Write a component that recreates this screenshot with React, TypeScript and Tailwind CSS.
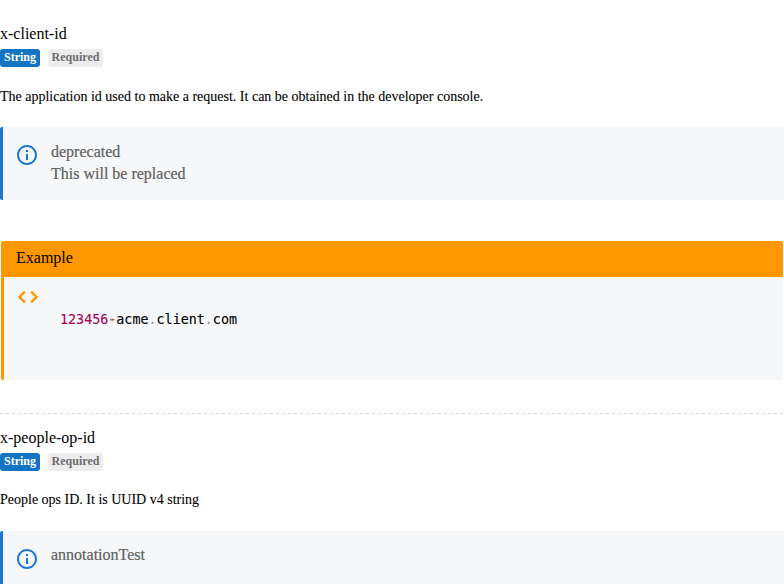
import React from 'react';

function Header({ name }: { name: string }) {
  return (
    <div>
      <div className="h-5 text-[16px] leading-5">{name}</div>
      <div className="mt-[5px] flex h-[18px] gap-2 text-[12px] font-bold leading-[17px]">
        <span className="w-10 rounded-[3px] bg-[#1474c4] text-center text-white">String</span>
        <span className="w-[55px] rounded-[3px] bg-[#ededed] text-center text-[#6c6c6c]">Required</span>
      </div>
    </div>
  );
}

function InfoIcon() {
  return (
    <svg viewBox="0 0 24 24" className="h-6 w-6 shrink-0 fill-[#1976d2]">
      <path d="M11 7h2v2h-2zm0 4h2v6h-2zm1-9C6.48 2 2 6.48 2 12s4.48 10 10 10 10-4.48 10-10S17.52 2 12 2zm0 18c-4.41 0-8-3.59-8-8s3.59-8 8-8 8 3.59 8 8-3.59 8-8 8z" />
    </svg>
  );
}

function Note({ lines, textClass }: { lines: string[]; textClass: string }) {
  return (
    <div className="flex h-[73px] rounded-[2px] border-l-[3px] border-[#1976d2] bg-[#f5f7f9] pl-3 pt-4">
      <InfoIcon />
      <div className={`${textClass} ml-3 text-[16px] leading-[22px] text-[#616161] [-webkit-text-stroke:0.2px]`}>
        {lines.map((l) => <div key={l}>{l}</div>)}
      </div>
    </div>
  );
}

export default function App() {
  return (
    <div className="h-[584px] overflow-hidden bg-white pt-6 font-['Liberation_Serif',serif] text-black">
      <Header name="x-client-id" />
      <p className="mt-5 h-5 text-[14px] leading-5 [-webkit-text-stroke:0.1px]">The application id used to make a request. It can be obtained in the developer console.</p>
      <div className="mt-5"><Note lines={['deprecated', 'This will be replaced']} textClass="-mt-[2px]" /></div>
      <section className="mx-px mt-[41px] h-[139px] overflow-hidden rounded-[2px] border-l-[3px] border-[#ff9800] bg-[#f5f7f9]">
        <div className="h-9 bg-[#ff9800] pl-3 text-[16px] leading-[34px]">Example</div>
        <div className="flex pl-3 pt-2">
          <svg viewBox="0 0 24 24" className="h-6 w-6 fill-[#ff9800] stroke-[#ff9800] [stroke-width:0.5]">
            <path d="M9.4 16.6 4.8 12l4.6-4.6L8 6l-6 6 6 6 1.4-1.4zm5.2 0 4.6-4.6-4.6-4.6L16 6l6 6-6 6-1.4-1.4z" />
          </svg>
          <code className="ml-5 mt-[25px] font-['DejaVu_Sans_Mono',monospace] text-[13.36px] leading-5 [-webkit-text-stroke:0.1px]"><span className="text-[#a3005c]">123456</span><span className="bg-white/50 text-[#9a6e3a] [-webkit-text-stroke:0.5px]">-</span>acme<span className="text-[#999999]">.</span>client<span className="text-[#999999]">.</span>com</code>
        </div>
      </section>
      <div className="mt-[33px] h-px bg-[repeating-linear-gradient(90deg,#d0d4d6_0px,#d0d4d6_3px,transparent_3px,transparent_6px)]" />
      <div className="mt-[14px]"><Header name="x-people-op-id" /></div>
      <p className="mt-[19px] h-5 text-[14px] leading-5 [-webkit-text-stroke:0.1px]">People ops ID. It is UUID v4 string</p>
      <div className="mt-[21px]"><Note lines={['annotationTest']} textClass="-mt-[3px]" /></div>
    </div>
  );
}
